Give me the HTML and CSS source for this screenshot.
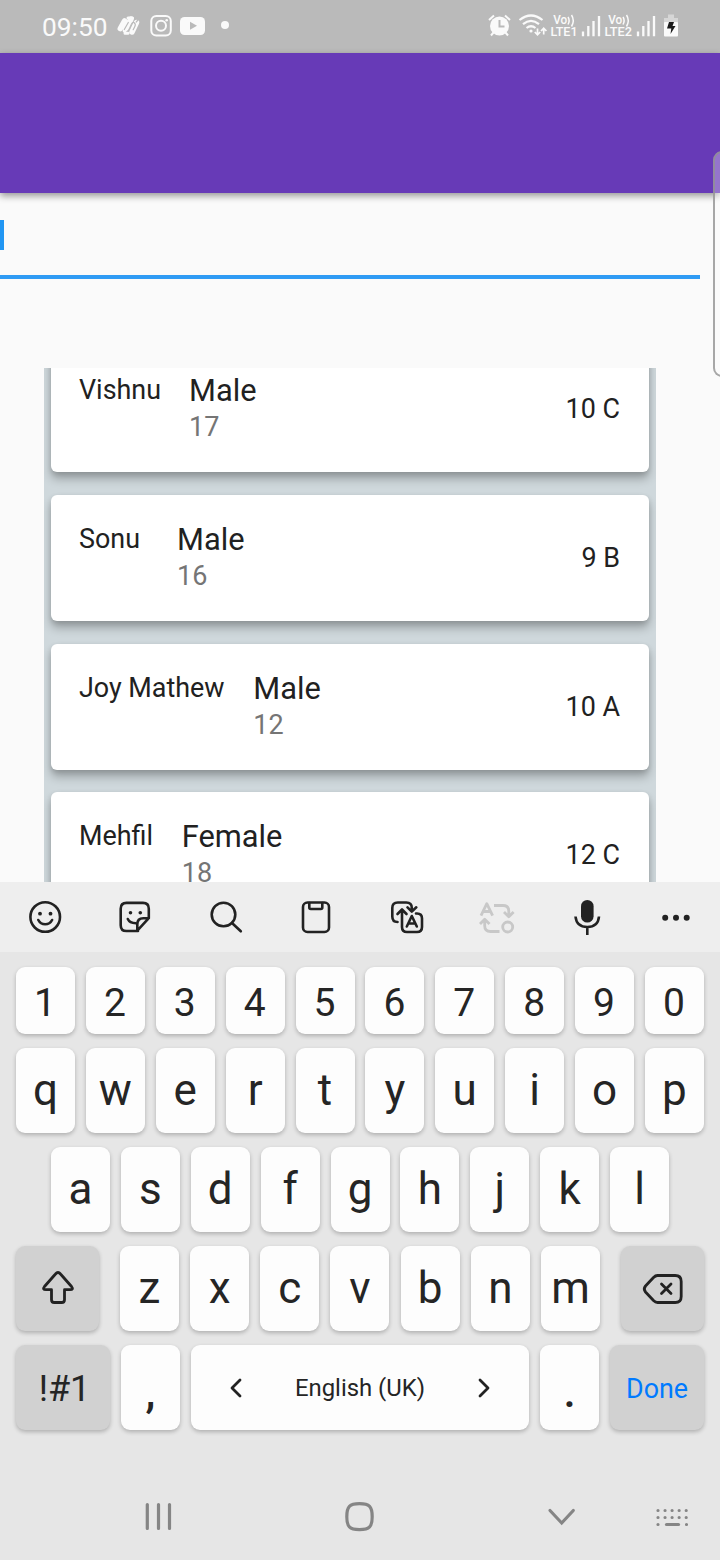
FILE: index.html
```html
<!DOCTYPE html>
<html lang="en">
<head>
<meta charset="utf-8">
<title>Students</title>
<link rel="stylesheet" href="styles.css">
</head>
<body>
<div class="screen">
  <header class="statusbar">
    <span class="clock">09:50</span>
    <svg class="notifs" width="130" height="53" viewBox="110 0 130 53">
      <g fill="none" stroke="#fafafa" stroke-linecap="round" stroke-linejoin="round">
        <path stroke-width="5.500" d="M120.300 28.500l4.200-7.500M125.500 30.500l5.500-11.500M132 32l4.500-9.500"/>
        <path stroke-width="3" d="M128 18h4.500M125 33.200h3"/>
        <path stroke="#bababa" stroke-width="1.200" d="M124.300 29.500l4-7M127 31.500q1.500-.5 2.500-3l2-4.500q1.500-2.500 3-1t.2 3.800l-1.500 2.900M137.500 20.500l-1.300 1.500"/>
        <rect x="151.300" y="16" width="19.500" height="19.500" rx="5" stroke-width="2"/>
        <circle cx="161" cy="25.700" r="5" stroke-width="2"/>
      </g>
      <circle cx="166.700" cy="20.200" r="1.300" fill="#fafafa"/>
      <rect x="180" y="17" width="25" height="18" rx="4.500" fill="#fafafa"/>
      <path d="M190 21.800v8l7-4z" fill="#bababa"/>
      <circle cx="225" cy="25" r="4" fill="#fafafa"/>
    </svg>
    <svg class="system" width="200" height="53" viewBox="480 0 200 53">
      <g fill="none" stroke="#fafafa" stroke-width="2">
        <circle cx="499.500" cy="26" r="9.500" fill="#fafafa" stroke="none"/>
        <path d="M489 20l5-4.500M505 15.500l5 4.500M493.500 32.500l-2.500 3M505.500 32.500l2.500 3"/>
        <path stroke="#bababa" d="M499.500 20v6.500h5"/>
        <path stroke-width="2.200" d="M519.500 20q11.500-9 23 0M523 24.200q8-6.500 16 0M526.500 28q4.500-3.500 9 0"/>
        <circle cx="531" cy="31" r="1.600" fill="#fafafa" stroke="none"/>
        <path stroke-width="1.700" d="M537.500 28.500v6M534.800 32l2.700 2.800 2.700-2.800M543.700 34.500v-6M541 31l2.700-2.800 2.700 2.800"/>
        <path stroke-width="1.500" d="M568 17q2.200 3.500 0 7.500M571.500 15q3.500 5.500 0 11.500M623 17q2.200 3.500 0 7.500M626.500 15q3.500 5.500 0 11.500"/>
        <path stroke-width="2.300" d="M583 31.500v4.700M588.300 26v10.200M593.500 21v15.200M599 16v20.200M638 31.500v4.700M643.300 26v10.200M648.500 21v15.200M654 16v20.200"/>
      </g>
      <g class="lte">
        <text x="553.300" y="24.300" textLength="14" lengthAdjust="spacingAndGlyphs">Vo</text>
        <text x="550.500" y="36" textLength="27" lengthAdjust="spacingAndGlyphs">LTE1</text>
        <text x="608.300" y="24.300" textLength="14" lengthAdjust="spacingAndGlyphs">Vo</text>
        <text x="604.500" y="36" textLength="27.500" lengthAdjust="spacingAndGlyphs">LTE2</text>
      </g>
      <path d="M668 14.500h6V18h4v5h-14v-5h4z" fill="#d6d6d6"/>
      <rect x="664" y="22" width="14" height="14.500" rx="1" fill="#fafafa"/>
      <path d="M669 22h5l-1.500 4h3l-5 8 .8-5.500h-4.300z" fill="#1b1b1b"/>
    </svg>
  </header>
  <div class="appbar"></div>
  <div class="search"><span class="caret"></span></div>
  <main class="list">
    <article class="card"><span class="name">Vishnu</span><div class="info"><p class="gender">Male</p><p class="age">17</p></div><span class="grade">10 C</span></article>
    <article class="card"><span class="name">Sonu</span><div class="info"><p class="gender">Male</p><p class="age">16</p></div><span class="grade">9 B</span></article>
    <article class="card"><span class="name">Joy Mathew</span><div class="info"><p class="gender">Male</p><p class="age">12</p></div><span class="grade">10 A</span></article>
    <article class="card"><span class="name">Mehfil</span><div class="info"><p class="gender">Female</p><p class="age">18</p></div><span class="grade">12 C</span></article>
  </main>
  <section class="keyboard">
    <div class="tools">
      <svg width="720" height="70" viewBox="0 882 720 70">
        <g fill="none" stroke="#222" stroke-width="2.600" stroke-linecap="round" stroke-linejoin="round">
          <circle cx="45.200" cy="917" r="14.800"/>
          <path d="M38.300 920q2.200 4.300 6.900 4.300t6.900-4.300"/>
          <path d="M138 931h-11.500q-5.800 0-5.800-5.800v-16.500q0-5.800 5.800-5.800h16.500q5.800 0 5.800 5.800v9.500l-11.500 12.500v-6.500q0-6 6-6h5.300"/>
          <path d="M127.800 919q1.800 4 8 4.300"/>
          <circle cx="223.500" cy="914.500" r="11.800"/><path d="M232 923l8.800 8.300"/>
          <rect x="303" y="902.500" width="26" height="29.500" rx="4.500"/>
          <path d="M309.300 903v4.500q0 1.500 1.500 1.500h10q1.500 0 1.500-1.500V903"/>
          <path d="M397.500 922q-5.200 0-5.200-5.500v-8.500q0-5.500 5.500-5.500h8.500q5.500 0 5.500 5.500v3.200M407.500 907.300l4.300 4.300 4.500-4.300M416 913.500h1q5 0 5 5v8.500q0 5-5 5h-10q-5 0-5-5v-17M397.500 914l4.500-4.500 4.500 4.500"/>
          <path d="M406.800 926.500l5-10.500 5 10.500M408.500 923.500h6.500"/>
        </g>
        <g fill="#222">
          <circle cx="40" cy="913.700" r="1.900"/><circle cx="50.500" cy="913.700" r="1.900"/>
          <circle cx="130.500" cy="912.700" r="1.800"/><circle cx="140.300" cy="912.700" r="1.800"/>
          <rect x="581" y="900" width="12.600" height="22.500" rx="6.300"/>
          <circle cx="665.200" cy="917.700" r="3"/><circle cx="676" cy="917.700" r="3"/><circle cx="686.700" cy="917.700" r="3"/>
        </g>
        <path fill="none" stroke="#222" stroke-width="2.600" d="M575.500 916.500q1 10.500 11.800 10.500t11.700-10.500M587.300 927v8"/>
        <g fill="none" stroke="#c8c8c8" stroke-width="2.800" stroke-linejoin="round">
          <path d="M481 915.700l5.800-12 5.800 12M483 911.500h8M494 905.500h9q5.800 0 5.800 5.800v5M504 912l4.800 4.700 4.800-4.700M499.500 931.500h-9q-5.800 0-5.800-5.800V920M480 924l4.700-4.700 4.800 4.700"/>
          <circle cx="507.700" cy="927" r="5"/>
        </g>
      </svg>
    </div>
    <div class="keys">
      <div class="row digits"><kbd>1</kbd><kbd>2</kbd><kbd>3</kbd><kbd>4</kbd><kbd>5</kbd><kbd>6</kbd><kbd>7</kbd><kbd>8</kbd><kbd>9</kbd><kbd>0</kbd></div>
      <div class="row"><kbd>q</kbd><kbd>w</kbd><kbd>e</kbd><kbd>r</kbd><kbd>t</kbd><kbd>y</kbd><kbd>u</kbd><kbd>i</kbd><kbd>o</kbd><kbd>p</kbd></div>
      <div class="row inset"><kbd>a</kbd><kbd>s</kbd><kbd>d</kbd><kbd>f</kbd><kbd>g</kbd><kbd>h</kbd><kbd>j</kbd><kbd>k</kbd><kbd>l</kbd></div>
      <div class="row">
        <kbd class="fn side"><svg width="40" height="40" viewBox="0 0 40 40"><path d="M17.500 5q2.500-3 5 0l11 12.500q2.500 3.200-1.500 3.200h-5.500v10q0 2.800-2.800 2.800h-7.400q-2.800 0-2.800-2.800v-10H8q-4 0-1.500-3.200z"/></svg></kbd>
        <div class="letters"><kbd>z</kbd><kbd>x</kbd><kbd>c</kbd><kbd>v</kbd><kbd>b</kbd><kbd>n</kbd><kbd>m</kbd></div>
        <kbd class="fn side"><svg width="44" height="40" viewBox="0 0 44 40"><path d="M16.500 6.500h17.700q6 0 6 6v15q0 6-6 6H16.500q-2 0-4-2l-8-8.500q-2.500-3 0-6l8-8.500q2-2 4-2zM20.500 15l9.500 9.500M30 15l-9.500 9.500"/></svg></kbd>
      </div>
      <div class="row">
        <kbd class="fn wide symbols">!#1</kbd>
        <kbd class="punct">,</kbd>
        <kbd class="space"><svg width="14" height="20" viewBox="0 0 14 20"><path d="M11 2L3 10l8 8"/></svg><span>English (UK)</span><svg width="14" height="20" viewBox="0 0 14 20"><path d="M3 2l8 8-8 8"/></svg></kbd>
        <kbd class="punct">.</kbd>
        <kbd class="fn wide done">Done</kbd>
      </div>
    </div>
    <nav class="navbar">
      <svg width="720" height="86" viewBox="0 1474 720 86">
        <g fill="none" stroke="#858585" stroke-width="3.200" stroke-linecap="round">
          <path d="M147.300 1504.500v24M158.500 1504.500v24M169.500 1504.500v24"/>
          <path d="M359.500 1503.700c10 0 12.700 3 12.700 13s-2.700 13-12.700 13-12.700-3-12.700-13 2.700-13 12.700-13z"/>
          <path d="M550 1510.500l11.700 12.500 11.600-12.500"/>
          <path d="M666.500 1524.500h12"/>
          <path stroke-dasharray="0 7.050" d="M658 1510.500h29M658 1517.500h29"/>
          <path d="M658 1524.500h0M686.500 1524.500h0"/>
        </g>
      </svg>
    </nav>
  </section>
  <div class="edge-handle"></div>
</div>
</body>
</html>
```
FILE: styles.css
```css
* { box-sizing: border-box; }
body { margin: 0; }
svg { display: block; }
.screen {
  position: relative;
  display: flex;
  flex-direction: column;
  width: 720px;
  height: 1560px;
  overflow: hidden;
  background: #fafafa;
  color: #212121;
  font-family: Roboto, "Liberation Sans", sans-serif;
}
.statusbar {
  display: flex;
  flex: none;
  align-items: center;
  height: 53px;
  padding: 0 40px 0 42px;
  background: #bababa;
}
.clock { width: 68px; color: #fafafa; font-size: 26.300px; }
.system { margin-left: auto; }
.lte { fill: #fafafa; font-size: 12.800px; font-weight: 500; }
.appbar {
  flex: none;
  height: 140px;
  background: #673ab7;
  box-shadow: 0 3px 7px rgba(0, 0, 0, .4);
}
.search {
  flex: none;
  width: 700px;
  height: 86px;
  padding-top: 27px;
  border-bottom: 4px solid #2f9bf4;
}
.caret {
  display: block;
  width: 4px;
  height: 30px;
  background: #2196f3;
}
.list {
  display: flex;
  flex: none;
  flex-direction: column;
  justify-content: flex-end;
  gap: 22.700px;
  width: 612px;
  height: 514px;
  margin: 89px 0 0 44px;
  padding: 0 7px;
  overflow: hidden;
  background: #cfd8dc;
}
.card {
  display: flex;
  flex: none;
  height: 126px;
  padding: 0 29px 0 28px;
  border-radius: 6px;
  background: #fff;
  box-shadow: 0 7px 10px rgba(0, 0, 0, .25), 0 2px 5px rgba(0, 0, 0, .12);
}
.card:last-child { margin-bottom: -36.400px; }
.name {
  min-width: 70px;
  margin-right: 28px;
  padding-top: 28px;
  font-size: 26.900px;
  line-height: 32px;
}
.info { flex: 1; padding-top: 27px; }
.gender, .age { margin: 0; line-height: 36px; }
.gender { font-size: 30.800px; }
.age { color: #757575; font-size: 27px; }
.card:last-child .info { padding-top: 26.500px; }
.card:nth-child(n+3) .info { margin-left: .8px; }
.grade { align-self: center; font-size: 26.900px; }
.keyboard { flex: none; height: 678px; background: #e6e6e6; }
.tools { height: 70px; background: #eee; }
.keys {
  display: flex;
  flex-direction: column;
  gap: 14px;
  height: 522px;
  padding: 15px 16px 0;
}
.row, .letters { display: flex; justify-content: space-between; }
.row { height: 85px; }
.row.inset { padding: 0 35px; }
.letters { width: 480px; }
kbd {
  display: flex;
  align-items: center;
  justify-content: center;
  width: 59px;
  height: 85px;
  padding-bottom: 1px;
  border-radius: 9px;
  background: #fdfdfd;
  box-shadow: 0 2px 4px rgba(0, 0, 0, .24);
  color: #252525;
  font-family: inherit;
  font-size: 44px;
}
.digits { height: 67px; }
.digits kbd { height: 67px; padding: 5px 1px 0 0; font-size: 39px; }
.fn { background: #d1d1d1; font-size: 36px; }
.side { width: 83px; padding: 1px 0 0; }
.wide { width: 94px; }
.symbols { padding: 2px 0 0 3px; }
kbd svg { fill: none; stroke: #222; stroke-width: 2.800; stroke-linecap: round; stroke-linejoin: round; }
.space { justify-content: space-between; width: 338px; padding: 1px 38px 0; font-size: 23.900px; }
.punct { padding-top: 9px; font-weight: 500; }
.done { padding-top: 3px; color: #007aff; font-size: 26.800px; }
.edge-handle {
  position: absolute;
  top: 151px;
  right: -12px;
  width: 19px;
  height: 226px;
  border: 2px solid rgba(145, 145, 145, .8);
  border-radius: 9px;
  background: rgba(255, 255, 255, .3);
}
```
